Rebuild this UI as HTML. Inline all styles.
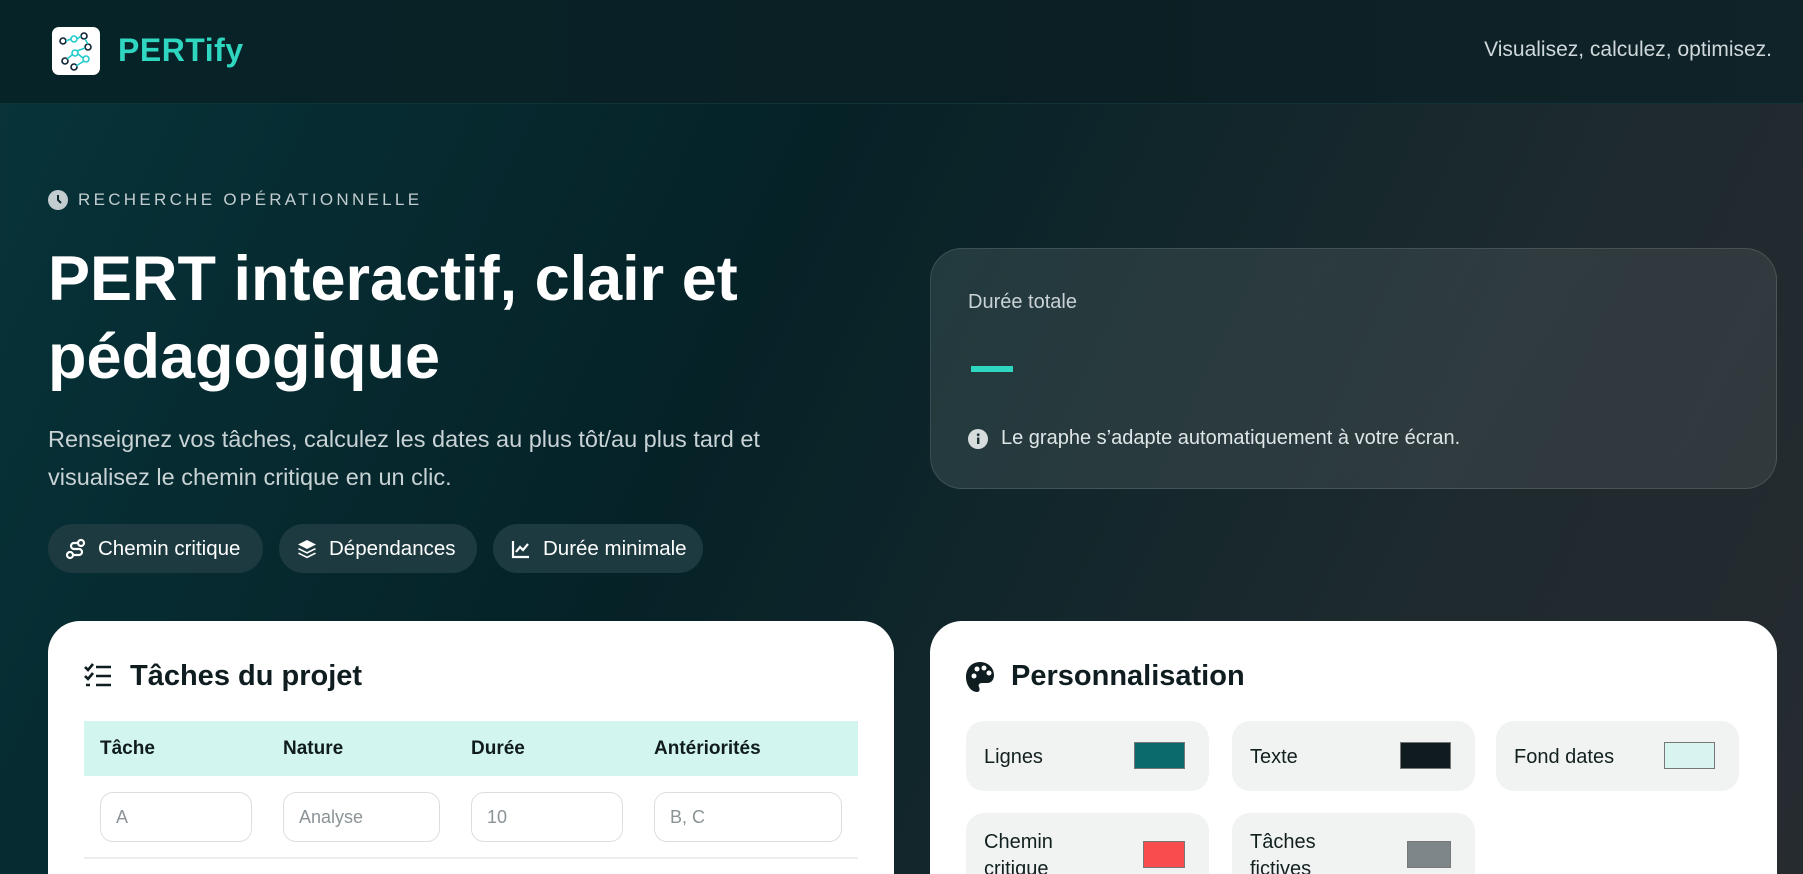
<!DOCTYPE html>
<html style="overflow:hidden;width:1803px;height:874px"><head><meta charset="utf-8"><style>
*{box-sizing:border-box;margin:0;padding:0}
body{width:1803px;height:874px;overflow:hidden;font-family:"Liberation Sans",sans-serif;background:linear-gradient(115deg,#07343a 0%,#052227 40%,#1d2a2e 75%,#262b30 100%);position:relative;color:#fff}
.hdr{position:absolute;left:0;top:0;width:1803px;height:104px;background:linear-gradient(90deg,#062428,#0b1f24 60%,#0f2328);border-bottom:1px solid #0e3338}
.logo{position:absolute;left:52px;top:27px;width:48px;height:48px;background:#fff;border-radius:7px}
.brand{position:absolute;left:118px;top:32px;font-size:32px;font-weight:700;color:#2fd6c0;letter-spacing:0.5px}
.tag{position:absolute;right:31px;top:38px;font-size:21px;color:#cfd8da}
.eyebrow{position:absolute;left:48px;top:190px;font-size:17px;letter-spacing:3.3px;color:#c3cdd0;display:flex;align-items:center;gap:10px}
h1{position:absolute;left:48px;top:240px;font-size:63px;line-height:78px;font-weight:700;color:#fff;width:800px}
.lead{position:absolute;left:48px;top:420px;font-size:23.5px;line-height:38px;color:#c9d3d5;width:760px}
.pill{position:absolute;top:524px;height:49px;border-radius:25px;background:#1c3a3f;display:flex;align-items:center;padding-left:17px;gap:11px;font-size:20.5px;color:#fff}
.stat{position:absolute;left:930px;top:248px;width:847px;height:241px;border-radius:32px;background:linear-gradient(120deg,rgba(255,255,255,0.1),rgba(255,255,255,0.07));border:1px solid rgba(255,255,255,0.12)}
.card{position:absolute;top:621px;height:253px;background:#fff;border-radius:32px 32px 0 0}
.h2{position:absolute;top:660px;font-size:29px;font-weight:700;color:#0f1d20}
.th{position:absolute;left:84px;top:721px;width:774px;height:55px;background:#d2f5f0}
.th span{position:absolute;top:17px;font-size:19px;font-weight:700;color:#101c1f}
.inp{position:absolute;top:792px;height:50px;border:1px solid #dcdfe0;border-radius:13px;font-size:18px;color:#8a9396;padding:14px 0 0 15px}
.sw{position:absolute;width:243px;height:70px;background:#f1f3f2;border-radius:18px;color:#12201f;font-size:20px}
.sw span{position:absolute;left:18px;top:23px;line-height:27px}
.sw i{position:absolute;right:24px;top:21px;width:51px;height:27px;border:1px solid #777}
</style></head><body>
<div class="hdr">
<div class="logo"><svg width="48" height="48" viewBox="0 0 48 48" fill="none" stroke-width="1.6"><circle cx="11" cy="14" r="3" stroke="#123"/><circle cx="22" cy="12" r="3" stroke="#2cc"/><circle cx="32" cy="9" r="3" stroke="#123"/><circle cx="36" cy="20" r="3" stroke="#123"/><circle cx="23" cy="26" r="3" stroke="#2cc"/><circle cx="13" cy="34" r="3" stroke="#123"/><circle cx="34" cy="32" r="3" stroke="#2cc"/><circle cx="22" cy="40" r="3" stroke="#123"/><path d="M14 14L19 12M25 12L29 9M33 12L36 17M25 24L33 21M20 28L15 32M26 27L31 31M24 39L32 34" stroke="#2cc"/></svg></div>
<div class="brand">PERTify</div>
<div class="tag">Visualisez, calculez, optimisez.</div>
</div>
<div class="eyebrow"><svg width="20" height="20" viewBox="0 0 20 20"><circle cx="10" cy="10" r="10" fill="#c3cdd0"/><path d="M10 5v5l3 3" stroke="#0a2a2e" stroke-width="2" fill="none"/></svg>RECHERCHE OPÉRATIONNELLE</div>
<h1>PERT interactif, clair et pédagogique</h1>
<div class="lead">Renseignez vos tâches, calculez les dates au plus tôt/au plus tard et visualisez le chemin critique en un clic.</div>
<div class="pill" style="left:48px;width:215px"><svg width="22" height="22" viewBox="0 0 22 22" fill="none" stroke="#fff" stroke-width="2.2"><circle cx="5" cy="17" r="3"/><circle cx="16" cy="5" r="3"/><path d="M8 17h6a3 3 0 0 0 0-6H9a3 3 0 0 1 0-6h4"/></svg>Chemin critique</div>
<div class="pill" style="left:279px;width:198px"><svg width="22" height="22" viewBox="0 0 22 22" fill="#fff"><path d="M11 2l9 4.5-9 4.5-9-4.5z"/><path d="M3 10l8 4 8-4 1 1.3-9 4.5-9-4.5z"/><path d="M3 14.5l8 4 8-4 1 1.3-9 4.5-9-4.5z"/></svg>Dépendances</div>
<div class="pill" style="left:493px;width:210px"><svg width="22" height="22" viewBox="0 0 22 22" fill="none" stroke="#fff" stroke-width="2.2"><path d="M3 3v16h16"/><path d="M6 14l4-5 3 3 5-6"/></svg>Durée minimale</div>
<div class="stat">
<div style="position:absolute;left:37px;top:42px;font-size:20px;color:#c9d3d5">Durée totale</div>
<div style="position:absolute;left:40px;top:117px;width:42px;height:6px;background:#2fd6c0"></div>
<div style="position:absolute;left:37px;top:178px;font-size:20px;color:#dfe6e7;display:flex;align-items:center;gap:13px"><svg width="20" height="20" viewBox="0 0 20 20"><circle cx="10" cy="10" r="10" fill="#d7dcdd"/><rect x="9" y="8.5" width="2.4" height="6.5" fill="#1f3337"/><circle cx="10.2" cy="5.8" r="1.4" fill="#1f3337"/></svg>Le graphe s’adapte automatiquement à votre écran.</div>
</div>
<div class="card" style="left:48px;width:846px"></div>
<div class="card" style="left:930px;width:847px"></div>
<svg style="position:absolute;left:84px;top:663px" width="30" height="26" viewBox="0 0 30 26" fill="none" stroke="#0f1d20" stroke-width="2.6"><path d="M1 4l3 3 5-6M1 13l3 3 5-6M2 22h4M12 4h15M12 13h15M12 22h15"/></svg>
<div class="h2" style="left:130px">Tâches du projet</div>
<div class="th"><span style="left:16px">Tâche</span><span style="left:199px">Nature</span><span style="left:387px">Durée</span><span style="left:570px">Antériorités</span></div>
<div class="inp" style="left:100px;width:152px">A</div>
<div class="inp" style="left:283px;width:157px">Analyse</div>
<div class="inp" style="left:471px;width:152px">10</div>
<div class="inp" style="left:654px;width:188px">B, C</div>
<div style="position:absolute;left:84px;top:857px;width:774px;height:2px;background:#eceeee"></div>
<svg style="position:absolute;left:965px;top:661px" width="30" height="32" viewBox="0 0 30 32"><path d="M15 1C6 1 1 8 1 16s5 15 11 15c3 0 3-3 2-5s0-4 3-4h5c5 0 7-4 7-8C29 7 23 1 15 1z" fill="#0f1d20"/><circle cx="9" cy="15" r="2.5" fill="#fff"/><circle cx="12" cy="8" r="2.5" fill="#fff"/><circle cx="19" cy="7" r="2.5" fill="#fff"/><circle cx="24" cy="12" r="2.5" fill="#fff"/></svg>
<div class="h2" style="left:1011px">Personnalisation</div>
<div class="sw" style="left:966px;top:721px"><span>Lignes</span><i style="background:#0b6a6c"></i></div>
<div class="sw" style="left:1232px;top:721px"><span>Texte</span><i style="background:#0f1b1f"></i></div>
<div class="sw" style="left:1496px;top:721px"><span>Fond dates</span><i style="background:#d8f4f0"></i></div>
<div class="sw" style="left:966px;top:813px;height:90px"><span style="top:16px">Chemin<br>critique</span><i style="background:#f94c4f;width:42px;top:28px"></i></div>
<div class="sw" style="left:1232px;top:813px;height:90px"><span style="top:16px">Tâches<br>fictives</span><i style="background:#7d8789;width:44px;top:28px"></i></div>
</body></html>
